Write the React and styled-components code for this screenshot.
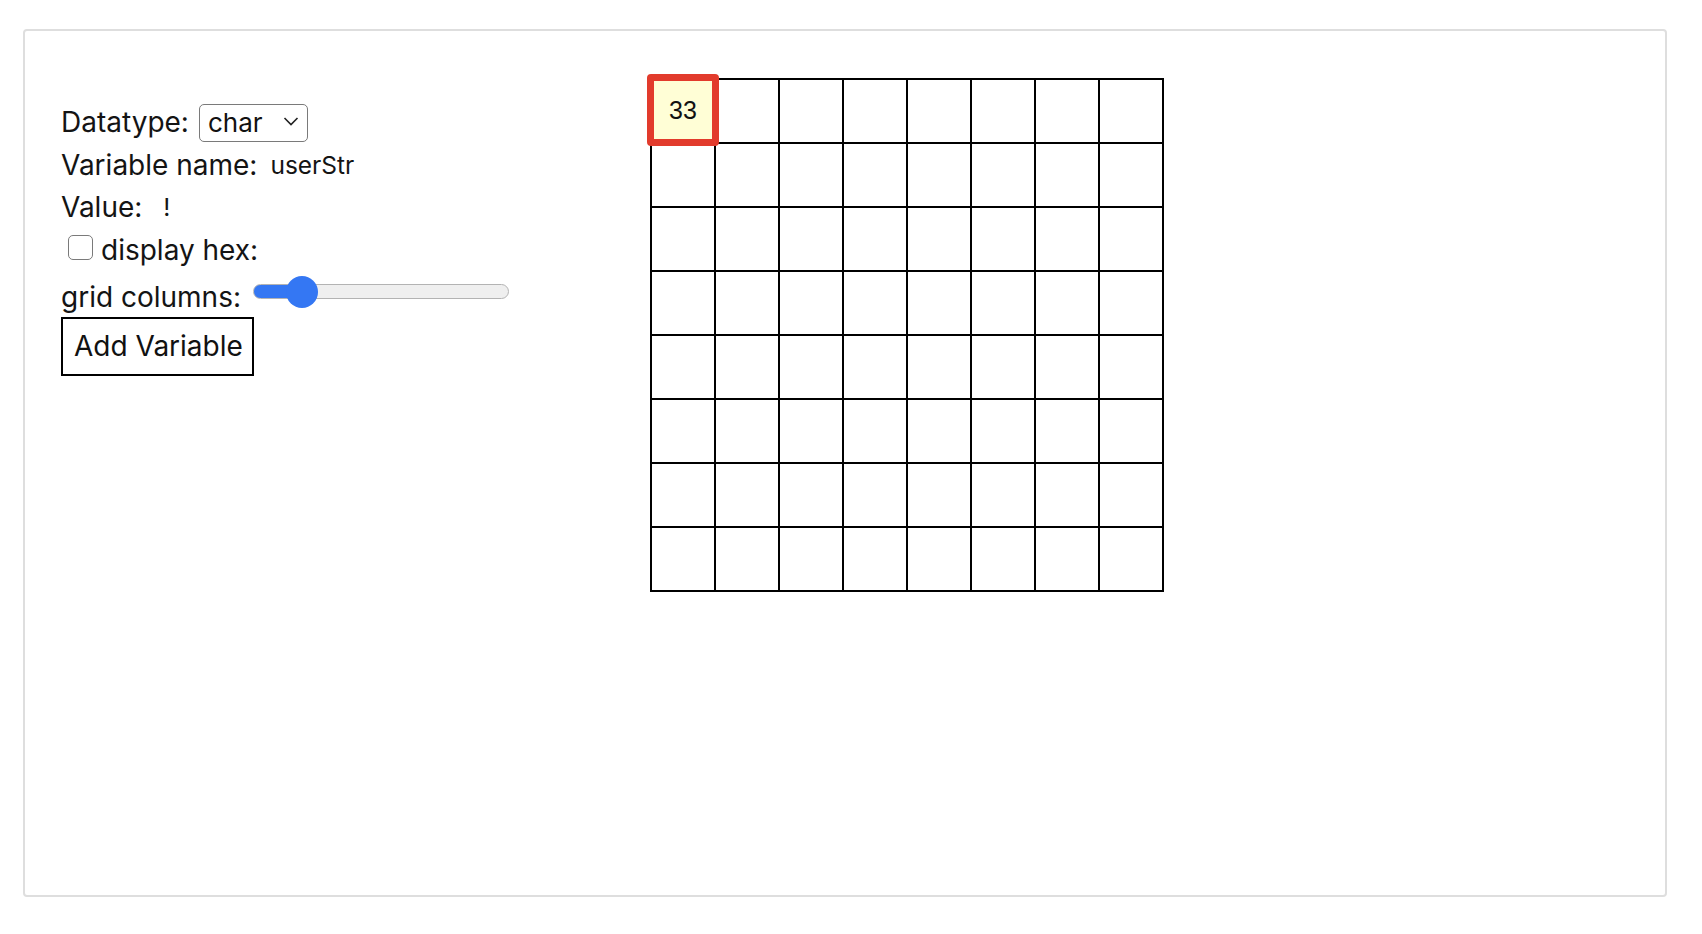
import React, { useState } from "react";
import styled, { createGlobalStyle } from "styled-components";

const GlobalStyle = createGlobalStyle`
  html, body {
    margin: 0;
    padding: 0;
    background: #ffffff;
  }
  body {
    font-family: Inter, "Liberation Sans", Arial, sans-serif;
    color: #141414;
  }
  * { box-sizing: border-box; }
`;

const Panel = styled.div`
  margin: 29px 0 0 23px;
  width: 1644px;
  height: 868px;
  border: 2px solid #dedede;
  border-radius: 4px;
  display: flex;
  align-items: flex-start;
  padding: 47px 0 0 36px;
`;

const Controls = styled.div`
  width: 589px;
  flex: none;
  display: flex;
  flex-direction: column;
  padding-top: 24px;
`;

const Row = styled.div`
  display: flex;
  align-items: ${(p) => p.$align || "center"};
  height: ${(p) => p.$h || 40}px;
  margin-top: ${(p) => p.$mt || 0}px;
  font-size: 28px;
  line-height: 40px;
  white-space: nowrap;
`;

const Label = styled.span`
  font-size: 28px;
  margin-top: ${(p) => p.$shift || 0}px;
`;

const Value = styled.span`
  font-size: 24.5px;
  margin-left: ${(p) => p.$gap}px;
`;

const SelectWrap = styled.div`
  position: relative;
  margin-left: 10px;
  width: 109px;
  height: 38px;
`;

const Select = styled.select`
  appearance: none;
  -webkit-appearance: none;
  width: 100%;
  height: 100%;
  border: 1.5px solid #7a7a7a;
  border-radius: 5px;
  background: #fff;
  font-family: Inter, "Liberation Sans", Arial, sans-serif;
  font-size: 26px;
  color: #111;
  padding: 0 0 1px 8px;
  outline: none;
`;

const Chevron = styled.svg`
  position: absolute;
  right: 9px;
  top: 15px;
  pointer-events: none;
`;

const Check = styled.input`
  appearance: none;
  -webkit-appearance: none;
  width: 25px;
  height: 25px;
  margin: -5px 8px 0 7px;
  border: 1.5px solid #7a7a7a;
  border-radius: 5px;
  background: #fff;
`;

const Slider = styled.input`
  appearance: none;
  -webkit-appearance: none;
  width: 256px;
  height: 15px;
  margin: 7px 0 0 12px;
  border: 1px solid #b3b3b3;
  border-radius: 8px;
  outline: none;

  &::-webkit-slider-thumb {
    -webkit-appearance: none;
    appearance: none;
    width: 32px;
    height: 32px;
    border-radius: 50%;
    background: #3477f3;
    border: none;
  }
`;

const AddButton = styled.button`
  align-self: flex-start;
  width: 193px;
  height: 59px;
  border: 2px solid #000;
  border-radius: 0;
  background: #fff;
  font-family: Inter, "Liberation Sans", Arial, sans-serif;
  font-size: 28px;
  color: #111;
  text-align: left;
  padding: 0 0 1px 11px;
  margin-top: 0;
`;

const Board = styled.div`
  display: grid;
  grid-template-columns: repeat(${(p) => p.$cols}, 62px);
  grid-auto-rows: 62px;
  gap: 2px;
  background: #000;
  border: 2px solid #000;
  width: max-content;
`;

const Cell = styled.div`
  position: relative;
  background: #fff;
`;

const Highlight = styled.div`
  position: absolute;
  left: -5px;
  top: -6px;
  width: 72px;
  height: 72px;
  border: 7px solid #e23b2c;
  border-radius: 4px;
  background: #fffed6;
  display: flex;
  align-items: center;
  justify-content: center;
  font-family: "Liberation Sans", Arial, sans-serif;
  font-size: 25px;
  color: #111;
  z-index: 1;
`;

export default function App() {
  const [cols, setCols] = useState(8);
  const min = 1;
  const max = 50;
  const thumb = 32;
  const width = 256;
  const pct = (cols - min) / (max - min);
  const fillPx = thumb / 2 + pct * (width - thumb);
  const cells = Array.from({ length: 64 }, (_, i) => i);

  return (
    <>
      <GlobalStyle />
      <Panel>
        <Controls>
          <Row $h={38}>
            <Label $shift={2}>Datatype:</Label>
            <SelectWrap>
              <Select defaultValue="char">
                <option value="char">char</option>
                <option value="int">int</option>
                <option value="float">float</option>
              </Select>
              <Chevron width="16" height="9" viewBox="0 0 16 9">
                <path d="M1.5 1 L8 7.5 L14.5 1" fill="none" stroke="#222" strokeWidth="1.6" />
              </Chevron>
            </SelectWrap>
          </Row>
          <Row $mt={5}>
            <Label>Variable name:</Label>
            <Value $gap={13}>userStr</Value>
          </Row>
          <Row $mt={2}>
            <Label>Value:</Label>
            <Value $gap={21}>!</Value>
          </Row>
          <Row $mt={3}>
            <Check type="checkbox" />
            <Label>display hex:</Label>
          </Row>
          <Row $mt={7} $align="flex-start">
            <Label>grid columns:</Label>
            <Slider
              type="range"
              min={min}
              max={max}
              value={cols}
              onChange={(e) => setCols(Number(e.target.value))}
              style={{
                background: `linear-gradient(to right, #3477f3 0px, #3477f3 ${fillPx}px, #efefef ${fillPx}px, #efefef 100%)`,
              }}
            />
          </Row>
          <AddButton>Add Variable</AddButton>
        </Controls>
        <Board $cols={8}>
          {cells.map((i) => (
            <Cell key={i}>{i === 0 && <Highlight>33</Highlight>}</Cell>
          ))}
        </Board>
      </Panel>
    </>
  );
}
